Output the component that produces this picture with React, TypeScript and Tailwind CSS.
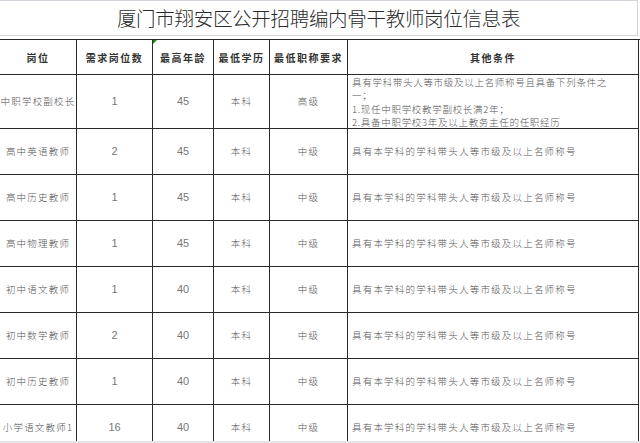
const cjk = { fontFamily: '"Noto Sans CJK SC", "Noto Sans", sans-serif' };
const num = { fontFamily: '"Liberation Sans", Arial, sans-serif' };

const heads = ["岗位", "需求岗位数", "最高年龄", "最低学历", "最低职称要求", "其他条件"];

const rows = [
  { name: "中职学校副校长", count: "1", age: "45", title: "高级" },
  { name: "高中英语教师", count: "2", age: "45", title: "中级" },
  { name: "高中历史教师", count: "1", age: "45", title: "中级" },
  { name: "高中物理教师", count: "1", age: "45", title: "中级" },
  { name: "初中语文教师", count: "1", age: "40", title: "中级" },
  { name: "初中数学教师", count: "2", age: "40", title: "中级" },
  { name: "初中历史教师", count: "1", age: "40", title: "中级" },
  { name: "小学语文教师1", count: "16", age: "40", title: "中级" },
];

const cell = "flex items-center justify-center border-r border-b border-[#2a2a2a]";
const txt = "text-[9.5px] font-light text-[#555] tracking-[1.2px]";

export default function App() {
  return (
    <div className="relative w-[640px] h-[443px] overflow-hidden bg-white" style={cjk}>
      <div className="h-[36px] border-t border-r border-b border-[#d4d4dc] mr-[2px] flex items-center justify-center">
        <h1 className="text-[19.5px] font-light text-[#2a2a2a] tracking-[-0.3px] leading-none">
          厦门市翔安区公开招聘编内骨干教师岗位信息表
        </h1>
      </div>
      <div className="mt-[3px] border-t border-[#2a2a2a] grid grid-cols-[77px_76px_61px_56px_78px_291px] auto-rows-[46px] grid-rows-[35px_54px]">
        {heads.map((h, i) => (
          <div key={h} className={`${cell} relative text-[10px] font-bold text-[#333] tracking-[1.5px]`}>
            {i === 2 && (
              <span className="absolute left-0 top-0 w-0 h-0 border-t-[4px] border-r-[4px] border-t-[#1a8a1a] border-r-transparent" />
            )}
            {h}
          </div>
        ))}
        {rows.map((r, idx) => (
          <div key={r.name} className="contents">
            <div className={`${cell} ${txt}`}>{r.name}</div>
            <div className={`${cell} text-[11px] text-[#777]`} style={num}>{r.count}</div>
            <div className={`${cell} text-[11px] text-[#777]`} style={num}>{r.age}</div>
            <div className={`${cell} ${txt}`}>本科</div>
            <div className={`${cell} ${txt}`}>{r.title}</div>
            {idx === 0 ? (
              <div className="border-r border-b border-[#2a2a2a] pl-[4px] pt-[1px] leading-[13.4px] text-[9.5px] font-light text-[#555] tracking-[0.7px]">
                <div>具有学科带头人等市级及以上名师称号且具备下列条件之</div>
                <div>一；</div>
                <div>1.现任中职学校教学副校长满2年；</div>
                <div>2.具备中职学校3年及以上教务主任的任职经历</div>
              </div>
            ) : (
              <div className={`flex items-center border-r border-b border-[#2a2a2a] pl-[4px] ${txt}`}>
                具有本学科的学科带头人等市级及以上名师称号
              </div>
            )}
          </div>
        ))}
      </div>
      <div className="absolute left-0 right-0 bottom-0 h-[2px] bg-[#e6e6ea]" />
    </div>
  );
}
